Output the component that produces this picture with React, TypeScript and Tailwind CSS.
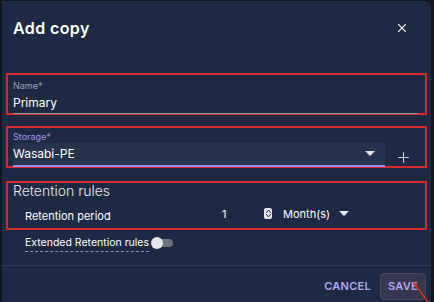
import { X, Plus } from "lucide-react";

const font = { fontFamily: "Inter, 'Noto Sans', sans-serif" };

const Caret = () => (
  <svg width="10" height="6" viewBox="0 0 10 6">
    <path d="M0 0 L10 0 L5 5 Z" fill="#e5e7eb" />
  </svg>
);

const App = () => {
  return (
    <div className="w-[434px] h-[302px] bg-[#12161f] overflow-hidden" style={font}>
      <div className="ml-[2px] mt-[1px] w-[429px] h-[301px] bg-[#1e2a44] rounded-tr-md flex flex-col">
        {/* header */}
        <div className="flex items-center justify-between pl-[11px] pr-[22px] pt-[7px] pb-[3px] h-[56px]">
          <h1 className="text-[16px] font-semibold text-white tracking-wide pb-[6px]">Add copy</h1>
          <X className="w-[14px] h-[14px] text-gray-200 mb-[6px]" strokeWidth={2} />
        </div>

        <div className="flex flex-col px-[4px] mt-[16px]">
          {/* name */}
          <div className="border-2 border-[#d42a2a] h-[42px] px-[5px] pt-[5px]">
            <div className="text-[9px] text-[#9aa3b5] leading-[12px]">Name*</div>
            <div className="text-[12px] text-white leading-[16px] mt-[3px]">Primary</div>
            <div className="h-px bg-[#8c94a6] mt-[2px] mr-[2px]" />
          </div>

          {/* storage */}
          <div className="border-2 border-[#d42a2a] h-[42px] mt-[11px] px-[5px] pt-[3px] flex flex-col">
            <div className="text-[9px] text-[#a692e8] leading-[12px]">Storage*</div>
            <div className="flex items-end">
              <div className="w-[372px] h-[24px] bg-[#27334d] flex flex-col">
                <div className="flex items-center justify-between h-[22px] pr-[10px]">
                  <span className="text-[12px] text-white">Wasabi-PE</span>
                  <Caret />
                </div>
                <div className="h-[2px] bg-[#9d8cf0]" />
              </div>
              <Plus className="w-[17px] h-[17px] text-gray-300 ml-[10px] mb-[1px]" strokeWidth={1.4} />
            </div>
          </div>

          {/* retention */}
          <div className="border-2 border-[#d42a2a] h-[49px] mt-[13px] px-[5px]">
            <div className="text-[14px] text-[#e5e7eb] font-light leading-[16px]">Retention rules</div>
            <div className="flex items-center mt-[7px] pl-[12px] h-[20px]">
              <span className="text-[11px] text-white w-[197px]">Retention period</span>
              <div className="w-[50px] h-[20px] flex flex-col justify-end">
                <div className="flex items-center justify-between">
                  <span className="text-[11px] text-white">1</span>
                  <span className="w-[8px] h-[11px] rounded-[2px] bg-[#e5e7eb] flex flex-col items-center justify-center gap-px">
                    <svg width="5" height="3" viewBox="0 0 5 3"><path d="M0 3L2.5 0L5 3" stroke="#1e2a44" fill="none" strokeWidth="1" /></svg>
                    <svg width="5" height="3" viewBox="0 0 5 3"><path d="M0 0L2.5 3L5 0" stroke="#1e2a44" fill="none" strokeWidth="1" /></svg>
                  </span>
                </div>
                <div className="h-px bg-[#8c94a6] mt-[4px]" />
              </div>
              <div className="w-[71px] ml-[11px] h-[20px] flex flex-col justify-end">
                <div className="flex items-center">
                  <span className="text-[11px] text-white">Month(s)</span>
                  <span className="ml-[9px] mt-px"><Caret /></span>
                </div>
                <div className="h-px bg-[#8c94a6] mt-[4px]" />
              </div>
            </div>
          </div>

          {/* extended */}
          <div className="flex items-center pl-[19px] mt-[5px]">
            <span className="text-[10.5px] text-white border-b border-dashed border-[#8c94a6] leading-[15px] pb-[1px]">
              Extended Retention rules
            </span>
            <div className="relative w-[20px] h-[8px] rounded-full bg-[#6b7280] ml-[4px] mb-[2px]">
              <div className="absolute -left-[2px] -top-[2px] w-[12px] h-[12px] rounded-full bg-[#e5e7eb]" />
            </div>
          </div>
        </div>

        {/* footer */}
        <div className="h-px bg-[#2f3b57] mt-[13px]" />
        <div className="flex items-center justify-end gap-[9px] pr-[5px] pt-[6px]">
          <button className="text-[11px] font-semibold text-[#b4a8f0] tracking-wide">CANCEL</button>
          <div className="relative">
            <button className="w-[46px] h-[27px] rounded-[4px] bg-[#393650] border border-[#4a4660] text-[11px] font-semibold text-[#b4a8f0] tracking-wide">
              SAVE
            </button>
            <svg className="absolute left-[30px] top-[8px]" width="20" height="24" viewBox="0 0 20 24">
              <path d="M4 3 L18 22" stroke="#e0301e" strokeWidth="1.3" />
              <path d="M3 2 L8 4 L5 7 Z" fill="#e0301e" />
            </svg>
          </div>
        </div>
      </div>
    </div>
  );
};

export default App;
